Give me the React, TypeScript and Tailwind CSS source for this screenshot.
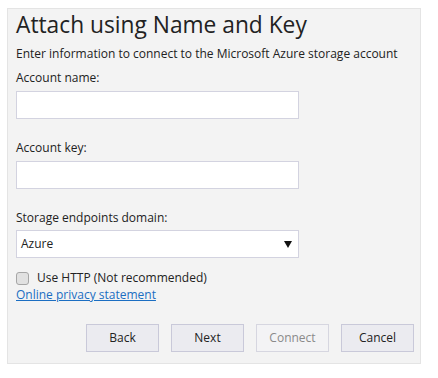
import { useState } from "react";

function Field({ label, mt }: { label: string; mt: string }) {
  return (
    <div className={mt}>
      <div className="text-[12px] leading-[18px] text-[#222]">{label}</div>
      <input
        type="text"
        className="mt-[4px] block h-[28px] w-[283px] border border-[#d3d3e0] bg-white px-[5px] text-[12px] outline-none"
      />
    </div>
  );
}

export default function App() {
  const [useHttp, setUseHttp] = useState(false);

  return (
    <main
      className="min-h-screen bg-white pl-[7px] pt-[8px]"
      style={{ fontFamily: '"Open Sans", "Noto Sans", sans-serif' }}
    >
      <section className="flex h-[356px] w-[414px] flex-col border border-[#e4e4e4] bg-[#f3f3f3] pl-[8px] pr-[6px]">
        <h1 className="mt-[2px] text-[22.75px] leading-[28px] font-normal text-[#222]">
          Attach using Name and Key
        </h1>
        <p className="mt-[6px] text-[12px] leading-[18px] text-[#222]">
          Enter information to connect to the Microsoft Azure storage account
        </p>

        <Field label="Account name:" mt="mt-[6px]" />
        <Field label="Account key:" mt="mt-[20px]" />

        <div className="mt-[20px]">
          <div className="text-[12px] leading-[18px] text-[#222]">Storage endpoints domain:</div>
          <div className="mt-[3px] flex h-[28px] w-[283px] items-center justify-between border border-[#d3d3e0] bg-white pl-[4px] pr-[6px]">
            <span className="text-[12px] text-[#222]">Azure</span>
            <svg width="8" height="7" viewBox="0 0 8 7">
              <polygon points="0,0 8,0 4,7" fill="#111" />
            </svg>
          </div>
        </div>

        <label className="mt-[12px] flex h-[16px] items-center gap-[8px] text-[12px] leading-[16px] text-[#222]">
          <span
            onClick={() => setUseHttp(!useHttp)}
            className="block h-[13px] w-[13px] rounded-[3px] border border-[#a6a6a6] bg-[#e1e1e1]"
          />
          Use HTTP (Not recommended)
        </label>
        <a href="#" className="w-fit text-[12px] leading-[18px] text-[#1b6ec2] underline">
          Online privacy statement
        </a>

        <div className="mt-auto mb-[11px] flex justify-end gap-[12px]">
          <button className="h-[28px] w-[73px] border border-[#c9c9d9] bg-[#ebebf0] text-[12px] text-[#222]">Back</button>
          <button className="h-[28px] w-[73px] border border-[#c9c9d9] bg-[#ebebf0] text-[12px] text-[#222]">Next</button>
          <button disabled className="h-[28px] w-[73px] border border-[#d6d6e0] bg-[#f3f3f5] text-[12px] text-[#8a8a8a]">Connect</button>
          <button className="h-[28px] w-[73px] border border-[#c9c9d9] bg-[#ebebf0] text-[12px] text-[#222]">Cancel</button>
        </div>
      </section>
    </main>
  );
}
